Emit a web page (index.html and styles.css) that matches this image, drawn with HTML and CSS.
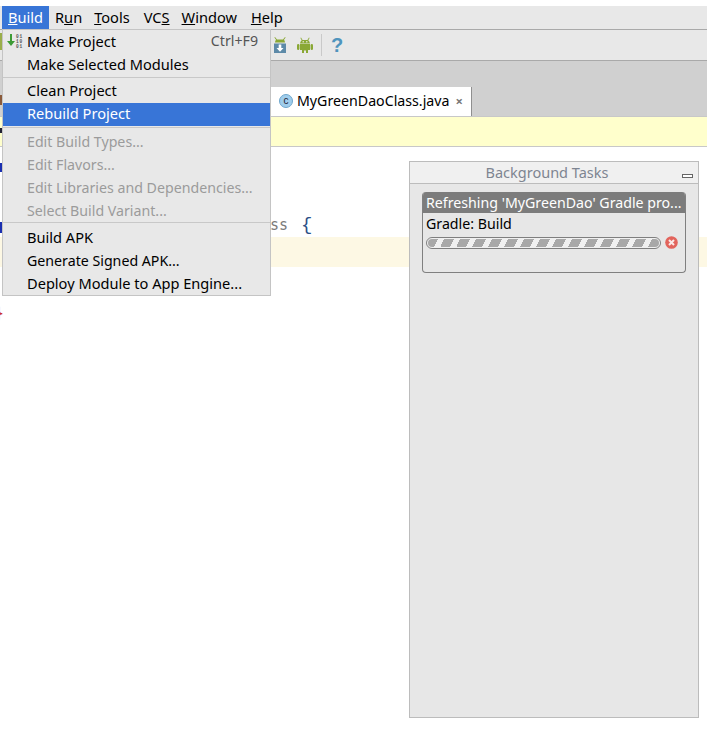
FILE: index.html
```html
<!DOCTYPE html>
<html lang="en">
<head>
<meta charset="utf-8">
<title>Build menu</title>
<link rel="stylesheet" href="styles.css">
</head>
<body>
<div class="ide">
  <nav class="menubar">
    <span class="top top-active"><u>B</u>uild</span>
    <span class="top">R<u>u</u>n</span>
    <span class="top"><u>T</u>ools</span>
    <span class="top top-shift">VC<u>S</u></span>
    <span class="top"><u>W</u>indow</span>
    <span class="top top-shift"><u>H</u>elp</span>
  </nav>
  <div class="toolbar">
    <svg class="tool" width="18" height="18" viewBox="0 0 18 18">
      <path d="M4 1 L6 3.5 H12 L14 1 L14.6 1.5 L13 3.7 A5 5 0 0 1 14 6.5 H4 A5 5 0 0 1 5 3.7 L3.4 1.5 Z" fill="#8aa835"/>
      <rect x="3" y="7.5" width="12" height="9.5" fill="#5d8aa8"/>
      <path d="M7.7 8.5 H10.3 V12 H12.5 L9 15.8 L5.5 12 H7.7 Z" fill="#fff"/>
    </svg>
    <svg class="tool" width="18" height="18" viewBox="0 0 18 18">
      <path d="M5 1.5 L6.6 4 H11.4 L13 1.5 L13.6 2 L12.3 4.3 A5 5 0 0 1 14 7.5 H4 A5 5 0 0 1 5.7 4.3 L4.4 2 Z" fill="#8aa835"/>
      <path d="M4 8 H14 V14 H12 V17 H10 V14.5 H8 V17 H6 V14 H4 Z" fill="#8aa835"/>
      <rect x="1" y="8" width="2.4" height="6" rx="1.2" fill="#8aa835"/>
      <rect x="14.6" y="8" width="2.4" height="6" rx="1.2" fill="#8aa835"/>
      <rect x="6.6" y="5.2" width="1.2" height="1.2" fill="#fff"/>
      <rect x="10.2" y="5.2" width="1.2" height="1.2" fill="#fff"/>
    </svg>
    <span class="tool-sep"></span>
    <span class="help">?</span>
  </div>
  <div class="tabstrip">
    <div class="tab">
      <span class="class-badge">c</span>
      <span class="tab-name">MyGreenDaoClass.java</span>
      <span class="tab-close">×</span>
    </div>
  </div>
  <div class="notice"></div>
  <main class="editor">
    <div class="line line-first"><span class="code-kw">ss</span><span class="code-brace">{</span></div>
    <div class="line line-current"></div>
    <div class="line line-end"><span class="code-close">}</span></div>
  </main>
</div>
<div class="left-edge"></div>

<div class="menu">
  <div class="item"><svg class="make-icon" width="18" height="16" viewBox="0 0 18 16"><path d="M3 1 H5 V8 H8 L4 13 L0 8 H3 Z" fill="#3d9b35"/><text x="9" y="5" class="bits">01</text><text x="9" y="10" class="bits">10</text><text x="9" y="15" class="bits">01</text></svg><span class="label">Make Project</span><span class="shortcut">Ctrl+F9</span></div>
  <div class="item"><span class="label">Make Selected Modules</span></div>
  <div class="divider"></div>
  <div class="item item-up"><span class="label">Clean Project</span></div>
  <div class="item item-up item-active"><span class="label">Rebuild Project</span></div>
  <div class="divider"></div>
  <div class="item item-low item-off"><span class="label">Edit Build Types...</span></div>
  <div class="item item-low item-off"><span class="label">Edit Flavors...</span></div>
  <div class="item item-low item-off"><span class="label">Edit Libraries and Dependencies...</span></div>
  <div class="item item-low item-off"><span class="label">Select Build Variant...</span></div>
  <div class="divider divider-tight"></div>
  <div class="item item-low"><span class="label">Build APK</span></div>
  <div class="item item-low item-narrow"><span class="label">Generate Signed APK...</span></div>
  <div class="item item-low"><span class="label">Deploy Module to App Engine...</span></div>
</div>

<section class="tasks">
  <header class="tasks-head">
    <span>Background Tasks</span>
    <span class="minimize"></span>
  </header>
  <div class="task">
    <div class="task-title">Refreshing 'MyGreenDao' Gradle pro...</div>
    <div class="task-name">Gradle: Build</div>
    <div class="task-progress">
      <div class="bar"></div>
      <svg class="cancel" width="13" height="13" viewBox="0 0 13 13"><circle cx="6.5" cy="6.5" r="6.3" fill="#e2645c"/><path d="M4 4 L9 9 M9 4 L4 9" stroke="#fbe9e7" stroke-width="2"/></svg>
    </div>
  </div>
</section>
</body>
</html>
```
FILE: styles.css
```css
* { box-sizing: border-box; }
html, body { margin: 0; padding: 0; background: #fff; }
body { width: 707px; height: 732px; overflow: hidden; position: relative; font-family: "Noto Sans", "Open Sans", sans-serif; font-size: 14.2px; color: #000; }
.ide { padding-top: 6px; display: flex; flex-direction: column; height: 100%; }
.menubar { height: 23px; background: #e8e8e8; display: flex; align-items: stretch; padding-left: 2px; flex: none; font-size: 14.6px; }
.top { padding: 0 6px; line-height: 23px; }
.top-active { background: #3875d7; color: #fff; }
.top-shift { margin-left: 2px; }
.toolbar { height: 32px; background: #e8e8e8; border-top: 1px solid #a9a9a9; border-bottom: 1px solid #a9a9a9; display: flex; align-items: center; padding-left: 271px; flex: none; }
.tool { flex: none; }
.tool + .tool { margin-left: 7px; }
.tool-sep { width: 1px; height: 22px; background: #c9c9c9; margin: 0 9px 0 7px; }
.help { font: bold 20px/1 "Liberation Sans", sans-serif; color: #4f94bd; }
.tabstrip { height: 55px; background: #d0d0d0; flex: none; display: flex; align-items: flex-end; padding-left: 271px; }
.tab { height: 29px; width: 201px; background: #fff; border-right: 1px solid #8f8f8f; display: flex; align-items: center; padding: 0 0 2px 8px; }
.class-badge { width: 14px; height: 14px; border-radius: 50%; background: #9fcdec; border: 1px solid #6ea6cc; font: 10px/12px "Liberation Sans", sans-serif; text-align: center; color: #223; margin-right: 4px; }
.tab-name { white-space: nowrap; }
.tab-close { margin-left: 6px; color: #777; font-weight: bold; font-size: 13px; }
.notice { height: 31px; background: #ffffcc; border-top: 1px solid #c8c8c8; border-bottom: 1px solid #c8c8c8; flex: none; }
.editor { flex: 1; background: #fff; font: 15px/24px "DejaVu Sans Mono", monospace; padding-top: 66px; }
.line { height: 24px; }
.line-first { padding-left: 270px; color: #7b7b7b; display: flex; align-items: center; }
.code-brace { color: #2d4f86; margin-left: 13px; font: 19px/24px "Liberation Mono", monospace; }
.line-current { height: 30px; background: #fdf8e4; }
.line-end { margin-top: 34px; }
.code-close { color: #c33; margin-left: -7px; display: inline-block; font: 19px/24px "Liberation Mono", monospace; }
.left-edge { position: absolute; left: 0; top: 33px; width: 2px; height: 200px; background: linear-gradient(to bottom, #9aae4a 0 17px, transparent 17px 62px, #8a5a3a 62px 72px, transparent 72px 95px, #223 95px 100px, transparent 100px 130px, #1a2fb0 130px 139px, transparent 139px 189px, #1a2fb0 189px 200px); }

.menu { position: absolute; left: 2px; top: 29px; width: 269px; height: 267px; background: #e8e8e8; border: 1px solid #c4c4c4; font-size: 14.6px; }
.item { height: 23px; display: flex; align-items: center; padding: 0 12px 2px 24px; position: relative; white-space: nowrap; }
.item-up { padding-bottom: 4px; }
.item-low { padding-bottom: 0; }
.item-active { background: #3875d7; color: #fff; }
.item-off { color: #9b9b9b; font-size: 14.2px; }
.item-narrow { font-size: 14.2px; padding-top: 1px; }
.shortcut { margin-left: auto; color: #555; font-size: 14.2px; }
.divider { height: 3px; margin-top: 1px; border-top: 1px solid #c8c8c8; }
.divider-tight { margin-top: 0; }
.make-icon { position: absolute; left: 4px; top: 3px; }
.bits { font: bold 4.5px "Liberation Mono", monospace; letter-spacing: 0.8px; fill: #555; }

.tasks { position: absolute; left: 409px; top: 161px; width: 290px; height: 557px; background: #e7e7e7; border: 1px solid #bcbcbc; }
.tasks-head { height: 22px; background: #f0f0f0; border-bottom: 1px solid #bcbcbc; display: flex; align-items: center; justify-content: center; padding: 0 14px 2px 0; color: #7e8591; position: relative; font-size: 14.5px; }
.minimize { position: absolute; right: 5px; top: 12px; width: 11px; height: 4px; border: 1px solid #666; background: #fff; }
.task { margin: 8px 12px 0; height: 81px; border: 1px solid #808080; border-top: 0; border-radius: 4px; overflow: hidden; }
.task-title { background: #7c7c7c; color: #fff; height: 21px; line-height: 21px; padding-left: 3px; white-space: nowrap; overflow: hidden; }
.task-name { height: 22px; line-height: 22px; padding-left: 3px; }
.task-progress { display: flex; align-items: center; padding-left: 3px; gap: 4px; margin-top: 1px; }
.bar { width: 235px; height: 12px; border: 1px solid #7f7f7f; border-radius: 6px; padding: 1px; background: repeating-linear-gradient(115deg, #a8a8a8 0 9px, #f0f0f0 9px 14.5px) content-box, #f0f0f0; }
.cancel { flex: none; }
```
